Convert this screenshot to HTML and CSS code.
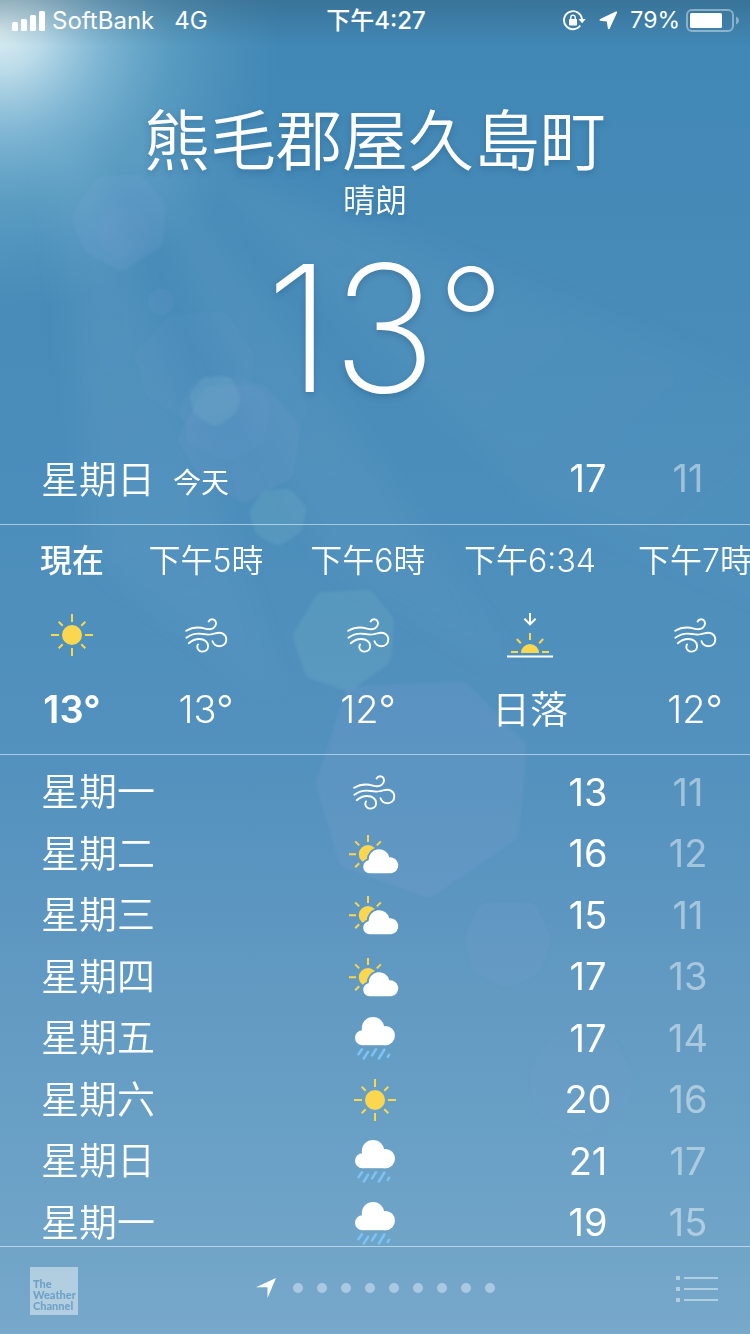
FILE: index.html
```html
<!DOCTYPE html>
<html lang="zh-Hant">
<head>
<meta charset="utf-8">
<meta name="viewport" content="width=device-width, initial-scale=1">
<title>天氣</title>
<link rel="stylesheet" href="styles.css">
</head>
<body>
<svg class="sprite" aria-hidden="true">
  <symbol id="sun" viewBox="0 0 42 42">
    <circle cx="21" cy="21" r="10" fill="#fbd750"/>
    <path d="M21 0v8M21 34v8M0 21h8M34 21h8M7.7 7.7l4 4M30.3 30.3l4 4M7.7 34.3l4-4M30.3 11.7l4-4" fill="none" stroke="#fbd750" stroke-width="2"/>
  </symbol>
  <symbol id="wind" viewBox="0 0 43 35">
    <g fill="none" stroke="#fff" stroke-width="1.900" stroke-linecap="round">
      <path d="M1.2 12.8C7.5 9 14 8.8 20 10.6c3.500 1 6.500 1 8.500-.6 1.800-1.300 2.500-2.700 2.500-4.400 0-2.500-1.700-4.300-3.900-4.300-1.600 0-2.800.7-3.500 2.200"/>
      <path d="M1.400 19.700C7 15.500 12.500 15 18 16c6.500 1.100 8 .8 12.300-.6 6.500-2 11 1.300 11 6.200 0 3.900-3 6.600-6.800 6.600-3.200 0-5.800-1.700-7-5"/>
      <path d="M3.800 25.200C7.500 22 10.800 21 14.200 21c5.300 0 8.900 2.900 8.900 7 0 3.400-2.500 5.600-5.500 5.600s-5.300-2.200-5.300-4.700c0-1 .2-1.800.8-2.500"/>
    </g>
  </symbol>
  <symbol id="sunset" viewBox="0 0 46 45">
    <path d="M23 0v11M17.400 5.800l5.600 5.600 5.600-5.600M0 43.500h46" fill="none" stroke="#fff" stroke-width="2"/>
    <path d="M14 40a9 9 0 0 1 18 0z" fill="#fbd750"/>
    <path d="M23 20v7M9.800 26l4 4.200M36.200 26l-4 4.200M4 39h7M35 39h7" fill="none" stroke="#fbd750" stroke-width="2"/>
  </symbol>
  <symbol id="partly" viewBox="0 0 51 39">
    <mask id="behind-cloud" maskUnits="userSpaceOnUse" x="0" y="0" width="51" height="39">
      <rect width="51" height="39" fill="#fff"/>
      <path d="M20.500 38.200a6.500 6.500 0 0 1-.9-12.900A10.500 10.500 0 0 1 40.300 22.300a8 8 0 1 1 2 15.900z" fill="#000" stroke="#000" stroke-width="3.600"/>
    </mask>
    <circle cx="19" cy="19.300" r="9.200" fill="#fbd750" mask="url(#behind-cloud)"/>
    <path d="M19 0v7M0 19.300h7M6.200 6.400l4 4M31.800 6.400l-4 4M6.200 32.200l4-4" fill="none" stroke="#fbd750" stroke-width="2"/>
    <path d="M20.500 38.200a6.500 6.500 0 0 1-.9-12.900A10.500 10.500 0 0 1 40.300 22.300a8 8 0 1 1 2 15.900z" fill="#fff"/>
  </symbol>
  <symbol id="rain" viewBox="0 0 40 43">
    <g fill="#fff">
      <circle cx="7.500" cy="20.700" r="7.500"/>
      <circle cx="18" cy="11.200" r="11.200"/>
      <circle cx="30.400" cy="18.600" r="9.600"/>
      <path d="M7.500 14h23v14.200h-23z"/>
    </g>
    <path d="M7 32.200l-3.600 5M13 34.800l-4.200 6.700M21 32.200l-3.900 6.200M29.400 32.500l-5.500 9M34.200 37.700l-1.400 2.200" fill="none" stroke="#7ac4f6" stroke-width="2.500" stroke-linecap="round"/>
  </symbol>
</svg>

<main class="app">
  <svg class="sky" viewBox="0 0 750 1334" preserveAspectRatio="xMinYMin slice" aria-hidden="true">
    <defs>
      <radialGradient id="glow" gradientUnits="userSpaceOnUse" cx="0" cy="30" r="280">
        <stop offset="0" stop-color="#e6f5f8" stop-opacity=".95"/>
        <stop offset=".15" stop-color="#d2ebf3" stop-opacity=".84"/>
        <stop offset=".38" stop-color="#a4d2e6" stop-opacity=".6"/>
        <stop offset=".62" stop-color="#84c0d6" stop-opacity=".34"/>
        <stop offset="1" stop-color="#6fb0cf" stop-opacity="0"/>
      </radialGradient>
      <linearGradient id="shade" x1="0" y1="0" x2="0" y2="1">
        <stop offset="0" stop-color="#2b4a5c" stop-opacity=".32"/>
        <stop offset="1" stop-color="#2b4a5c" stop-opacity="0"/>
      </linearGradient>
      <linearGradient id="beam" gradientUnits="userSpaceOnUse" x1="80" y1="120" x2="600" y2="700">
        <stop offset="0" stop-color="#9cc6e0" stop-opacity=".11"/>
        <stop offset="1" stop-color="#9cc6e0" stop-opacity=".02"/>
      </linearGradient>
      <filter id="soft" x="-20%" y="-20%" width="140%" height="140%"><feGaussianBlur stdDeviation="14"/></filter>
      <filter id="edge"><feGaussianBlur stdDeviation="1.500"/></filter>
    </defs>
    <g fill="url(#beam)" filter="url(#soft)">
      <path d="M50 150L100 560 280 700 100 160z"/>
      <path d="M120 150L330 560 520 680 160 140z"/>
      <path d="M170 150L540 500 800 620 800 400z"/>
    </g>
    <rect width="750" height="400" fill="url(#glow)"/>
    <rect width="750" height="46" fill="url(#shade)"/>
    <g fill="#86a5d6" stroke="#86a5d6" stroke-linejoin="round" stroke-width="24" filter="url(#edge)">
      <path opacity=".16" d="M104 188L136 187 154 209 151 239 121 258 94 243 84 218z"/>
      <path opacity=".06" d="M116 220L133 220 139 232 136 243 122 247 111 239 110 229z"/>
      <path opacity=".06" d="M176 326L219 324 242 356 238 393 192 413 157 388 148 357z"/>
      <path opacity=".08" d="M201 391L241 389 257 406 253 435 227 448 199 434 193 410z"/>
      <path opacity=".14" d="M212 398L258 396 288 429 282 470 244 490 210 469 191 439z"/>
      <path opacity=".17" d="M356 698L460 694 515 749 507 831 428 885 350 857 328 783z"/>
      <path opacity=".12" d="M489 915L527 915 538 939 530 965 507 975 483 963 477 940z"/>
      <path opacity=".08" d="M561 1044L604 1044 621 1076 614 1109 580 1123 548 1106 541 1074z"/>
    </g>
    <circle cx="161" cy="302" r="13" fill="#86a5d6" opacity=".1"/>
    <g fill="#83bfca" stroke="#83bfca" stroke-linejoin="round" stroke-width="20" filter="url(#edge)">
      <path opacity=".2" d="M208 387L224 386 230 398 227 408 215 416 203 408 200 397z"/>
      <path opacity=".2" d="M269 500L286 499 296 511 293 525 278 535 264 527 260 513z"/>
      <path opacity=".18" d="M324 602L366 600 384 622 381 657 347 681 314 669 303 637z"/>
    </g>
  </svg>

  <header class="status">
    <div class="status-side">
      <svg width="33" height="20" viewBox="0 0 33 20" fill="#fff" role="img" aria-label="訊號">
        <rect y="11" width="6" height="9" rx="1.500"/><rect x="9" y="8" width="6" height="12" rx="1.500"/><rect x="18" y="4" width="6" height="16" rx="1.500"/><rect x="27" width="6" height="20" rx="1.500"/>
      </svg>
      <span class="carrier">SoftBank</span>
      <span class="network">4G</span>
    </div>
    <time class="clock">下午4:27</time>
    <div class="status-side status-right">
      <svg width="23" height="21" viewBox="0 0 23 21" role="img" aria-label="方向鎖定">
        <path d="M17.300 15.500A9 9 0 1 1 19 9.500" fill="none" stroke="#fff" stroke-width="1.900"/>
        <path d="M15.500 9h7.200l-3.600 4.300z" fill="#fff"/>
        <rect x="6" y="9" width="8" height="6.500" rx=".8" fill="#fff"/>
        <path d="M7.800 9.500V7.300a2.200 2.200 0 0 1 4.400 0v2.200" fill="none" stroke="#fff" stroke-width="1.400"/>
      </svg>
      <svg class="locate" width="19" height="19" viewBox="0 0 19 19" role="img" aria-label="定位">
        <path d="M16.800.6L1.200 8C.2 8.600.3 9.500 1.200 9.700L7.800 10.600 8.900 17.400c.2.900 1.300 1 1.800.1L18 1.800c.4-.9-.3-1.600-1.200-1.200z" fill="#fff"/>
      </svg>
      <span class="percent">79%</span>
      <svg width="54" height="23" viewBox="0 0 54 23" role="img" aria-label="電池">
        <rect x="1" y="1" width="46" height="21" rx="5" fill="none" stroke="#fff" stroke-opacity=".4" stroke-width="2"/>
        <rect x="4" y="4" width="32" height="15" rx="1.500" fill="#fff"/>
        <path d="M50 7.500c4 1.500 4 6.500 0 8z" fill="#fff" fill-opacity=".4"/>
      </svg>
    </div>
  </header>

  <section class="current">
    <h1 class="place">熊毛郡屋久島町</h1>
    <p class="condition">晴朗</p>
    <p class="now-temp">13<span class="degree">°</span></p>
  </section>

  <section class="today">
    <h2 class="today-name">星期日<span class="today-tag">今天</span></h2>
    <span class="high">17</span>
    <span class="low">11</span>
  </section>

  <ol class="hours">
    <li class="hour hour-now"><span class="label">現在</span><span class="sign"><svg width="42" height="42"><use href="#sun"/></svg></span><span class="temp">13°</span></li>
    <li class="hour"><span class="label">下午5時</span><span class="sign"><svg width="43" height="35"><use href="#wind"/></svg></span><span class="temp">13°</span></li>
    <li class="hour"><span class="label">下午6時</span><span class="sign"><svg width="43" height="35"><use href="#wind"/></svg></span><span class="temp">12°</span></li>
    <li class="hour"><span class="label">下午6:34</span><span class="sign"><svg width="46" height="45"><use href="#sunset"/></svg></span><span class="temp">日落</span></li>
    <li class="hour hour-last"><span class="label">下午7時</span><span class="sign"><svg width="43" height="35"><use href="#wind"/></svg></span><span class="temp">12°</span></li>
  </ol>

  <section class="forecast">
    <table class="days">
      <colgroup><col class="col-day"><col class="col-sky"><col class="col-high"><col class="col-low"></colgroup>
      <tbody>
        <tr><th scope="row">星期一</th><td class="sky-cell"><svg width="43" height="35"><use href="#wind"/></svg></td><td class="high">13</td><td class="low">11</td></tr>
        <tr><th scope="row">星期二</th><td class="sky-cell"><svg width="51" height="39"><use href="#partly"/></svg></td><td class="high">16</td><td class="low">12</td></tr>
        <tr><th scope="row">星期三</th><td class="sky-cell"><svg width="51" height="39"><use href="#partly"/></svg></td><td class="high">15</td><td class="low">11</td></tr>
        <tr><th scope="row">星期四</th><td class="sky-cell"><svg width="51" height="39"><use href="#partly"/></svg></td><td class="high">17</td><td class="low">13</td></tr>
        <tr><th scope="row">星期五</th><td class="sky-cell"><svg width="40" height="43"><use href="#rain"/></svg></td><td class="high">17</td><td class="low">14</td></tr>
        <tr><th scope="row">星期六</th><td class="sky-cell"><svg width="42" height="42"><use href="#sun"/></svg></td><td class="high">20</td><td class="low">16</td></tr>
        <tr><th scope="row">星期日</th><td class="sky-cell"><svg width="40" height="43"><use href="#rain"/></svg></td><td class="high">21</td><td class="low">17</td></tr>
        <tr><th scope="row">星期一</th><td class="sky-cell"><svg width="40" height="43"><use href="#rain"/></svg></td><td class="high">19</td><td class="low">15</td></tr>
      </tbody>
    </table>
  </section>

  <footer class="bar">
    <a class="brand" href="#">The<br>Weather<br>Channel</a>
    <nav class="pages" aria-label="地點">
      <button class="page-here" aria-label="目前位置"><svg width="20" height="20" viewBox="0 0 20 20"><path d="M20 0L11.500 20V9.300H0z" fill="#fff"/></svg></button>
      <button class="dot" aria-label="地點 1"></button>
      <button class="dot" aria-label="地點 2"></button>
      <button class="dot" aria-label="地點 3"></button>
      <button class="dot" aria-label="地點 4"></button>
      <button class="dot" aria-label="地點 5"></button>
      <button class="dot" aria-label="地點 6"></button>
      <button class="dot" aria-label="地點 7"></button>
      <button class="dot" aria-label="地點 8"></button>
      <button class="dot" aria-label="地點 9"></button>
    </nav>
    <button class="list" aria-label="地點列表">
      <svg width="42" height="26" viewBox="0 0 42 26" fill="#fff" fill-opacity=".45"><path d="M0 0h4v4H0zM0 11h4v4H0zM0 22h4v4H0zM8 1h34v2H8zM8 12h34v2H8zM8 23h34v2H8z"/></svg>
    </button>
  </footer>
</main>
</body>
</html>
```
FILE: styles.css
```css
* {
  box-sizing: border-box;
}

body {
  margin: 0;
  color: #fff;
  font-family: Inter, "Noto Sans CJK TC", sans-serif;
  font-weight: 400;
}

h1, h2, p, ol {
  margin: 0;
  padding: 0;
}

svg {
  display: block;
}

button {
  padding: 0;
  border: 0;
  background: none;
  cursor: pointer;
}

.sprite {
  position: absolute;
  width: 0;
  height: 0;
}

.app {
  position: relative;
  display: flex;
  flex-direction: column;
  height: 100vh;
  overflow: hidden;
  background: linear-gradient(#4087b5 0%, #478bb8 20%, #4e8fbc 45%, #5391be 57%, #629ac2 75%, #70a5c8 94%, #78a8ca 100%);
}

/* Sun glow and lens flare behind the content */
.sky {
  position: absolute;
  inset: 0;
  width: 100%;
  height: 100%;
}

.status, .current, .today, .hours, .forecast, .bar {
  position: relative;
  flex: none;
}

/* Status bar */
.status {
  display: grid;
  grid-template-columns: 1fr auto 1fr;
  align-items: center;
  height: 41px;
  padding: 0 10px 0 12px;
  font-size: 24px;
  line-height: 41px;
}

.status-side {
  display: flex;
  align-items: center;
}

.status-right {
  justify-content: flex-end;
}

.carrier {
  margin-left: 7px;
}

.network {
  margin-left: 20px;
}

.clock {
  font-weight: 500;
}

.locate {
  margin-left: 13px;
}

.percent {
  margin: 0 6px 0 12px;
  font-size: 23px;
}

/* Current conditions */
.current {
  padding-top: 60px;
  text-align: center;
  text-shadow: 0 3px 6px rgba(20, 60, 100, .25);
}

.place {
  font-size: 66px;
  font-weight: 350;
  line-height: 80px;
}

.condition {
  font-size: 32px;
  font-weight: 350;
  line-height: 40px;
}

.now-temp {
  padding-left: 20px;
  font-size: 176px;
  font-weight: 200;
  line-height: 214px;
}

.degree {
  font-size: 150px;
  line-height: 0;
  vertical-align: 16px;
}

/* Today and the daily rows share the high and low columns */
.today {
  display: flex;
  align-items: center;
  height: 90px;
  padding: 0 38px 4px 41px;
  border-bottom: 1px solid rgba(255, 255, 255, .5);
}

.today-name {
  flex: 1;
  padding-bottom: 3px;
  font-size: 38px;
  font-weight: 350;
}

.today-tag {
  margin-left: 18px;
  font-size: 28px;
  font-weight: 400;
}

.high, .low {
  width: 48px;
  font-size: 38px;
  text-align: center;
}

.high {
  margin-right: 52px;
}

.low {
  opacity: .45;
}

/* Hourly strip */
.hours {
  display: flex;
  height: 230px;
  padding-left: 19px;
  overflow: hidden;
  border-bottom: 1px solid rgba(255, 255, 255, .5);
  list-style: none;
}

.hour {
  display: flex;
  flex: 0 0 162px;
  flex-direction: column;
  align-items: center;
  font-weight: 350;
  white-space: nowrap;
}

.hour-now {
  flex-basis: 106px;
  font-weight: 600;
}

.hour-now .label {
  font-weight: 500;
}

.hour-last {
  flex-basis: 168px;
}

.label {
  font-size: 32px;
  line-height: 72px;
}

.sign {
  display: flex;
  align-items: center;
  height: 76px;
}

.temp {
  font-size: 38px;
  line-height: 72px;
}

/* Daily forecast */
.forecast {
  flex: 1;
  min-height: 0;
  padding: 7px 38px 0 41px;
  overflow: hidden;
}

.days {
  width: 100%;
  height: 492px;
  border-collapse: collapse;
  table-layout: fixed;
}

.col-day {
  width: 144px;
}

.col-high {
  width: 100px;
}

.col-low {
  width: 48px;
}

.days th {
  padding: 0 0 3px;
  font-size: 38px;
  font-weight: 350;
  line-height: 52px;
  text-align: left;
}

.days td {
  padding: 0 0 2px;
}

.days .high {
  padding-right: 52px;
}

.days .sky-cell {
  padding: 0;
}

.sky-cell svg {
  margin: 0 auto;
}

/* Bottom bar */
.bar {
  display: grid;
  grid-template-columns: 1fr auto 1fr;
  align-items: center;
  height: 88px;
  padding: 0 30px 5px;
  border-top: 1px solid rgba(255, 255, 255, .5);
}

.brand {
  width: 48px;
  height: 48px;
  margin-top: 6px;
  padding: 11px 0 0 3px;
  background: rgba(255, 255, 255, .45);
  color: #6fa2c6;
  font-family: Lato, sans-serif;
  font-size: 11px;
  font-weight: 900;
  line-height: 11px;
  text-decoration: none;
}

.pages {
  display: flex;
  align-items: center;
  gap: 14px;
}

.page-here {
  margin-right: 3px;
}

.dot {
  width: 10px;
  height: 10px;
  border-radius: 50%;
  background: rgba(255, 255, 255, .4);
}

.list {
  justify-self: end;
  margin: 2px 2px 0 0;
}
```
